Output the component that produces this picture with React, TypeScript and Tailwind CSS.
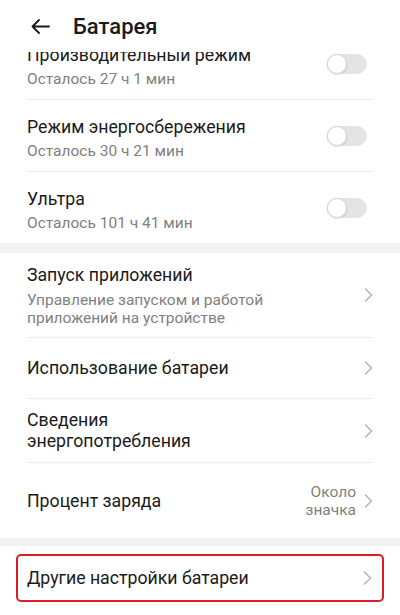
import { ReactNode } from 'react';

const font = { fontFamily: 'Roboto, "Noto Sans", "Liberation Sans", sans-serif' };

function Chevron() {
  return (
    <svg width="9" height="14" viewBox="0 0 9 14" fill="none" className="shrink-0">
      <polyline points="1.5,1 7.5,7 1.5,13" stroke="#b4b4b4" strokeWidth="1.5" strokeLinecap="round" strokeLinejoin="round" />
    </svg>
  );
}

function Toggle() {
  return (
    <div className="w-[40px] h-[20px] rounded-full bg-[#e4e4e4] flex items-center shrink-0 mr-[6px]">
      <div className="w-[20px] h-[20px] rounded-full bg-white border border-[#d4d4d4] shadow-[0_1px_2px_rgba(0,0,0,0.12)]" />
    </div>
  );
}

function Divider() {
  return <div className="mx-[27px] h-px bg-[#ececec]" />;
}

function ModeRow({ title, sub }: { title: string; sub: string }) {
  return (
    <div className="flex items-center justify-between px-[27px] h-[71px] pt-[4px]">
      <div className="flex flex-col">
        <span className="text-[17.7px] leading-[24px] text-[#1a1a1a]">{title}</span>
        <span className="text-[15.5px] leading-[20px] text-[#808080] mt-[2px]">{sub}</span>
      </div>
      <div className="-mt-[4px]">
        <Toggle />
      </div>
    </div>
  );
}

function LinkRow({ children, right, className }: { children: ReactNode; right?: ReactNode; className: string }) {
  return (
    <div className={`flex items-center justify-between px-[27px] ${className}`}>
      <div className="flex flex-col">{children}</div>
      <div className="flex items-center gap-[8px]">
        {right}
        <Chevron />
      </div>
    </div>
  );
}

export default function App() {
  return (
    <div className="w-[400px] h-[615px] bg-white overflow-hidden flex flex-col" style={font}>
      <div className="h-[52px] shrink-0 flex items-center pl-[31px] bg-white relative z-10">
        <svg width="19" height="15" viewBox="0 0 19 15" fill="none">
          <path d="M18 7.5H1.5M8 1L1.5 7.5L8 14" stroke="#1a1a1a" strokeWidth="1.8" strokeLinecap="round" strokeLinejoin="round" />
        </svg>
        <span className="ml-[23px] text-[22px] font-medium text-[#1a1a1a] leading-none mt-[1px]">Батарея</span>
      </div>

      <div className="flex-1 overflow-hidden">
        <div className="mt-[-24px]">
          <ModeRow title="Производительный режим" sub="Осталось 27 ч 1 мин" />
          <Divider />
          <ModeRow title="Режим энергосбережения" sub="Осталось 30 ч 21 мин" />
          <Divider />
          <ModeRow title="Ультра" sub="Осталось 101 ч 41 мин" />

          <div className="h-[10px] bg-[#f2f2f2]" />

          <LinkRow className="h-[84px]">
            <span className="text-[17.7px] leading-[24px] text-[#1a1a1a]">Запуск приложений</span>
            <span className="text-[15.5px] leading-[18px] text-[#808080] mt-[4px] w-[272px]">
              Управление запуском и работой приложений на устройстве
            </span>
          </LinkRow>
          <Divider />
          <LinkRow className="h-[60px]">
            <span className="text-[17.7px] leading-[24px] text-[#1a1a1a]">Использование батареи</span>
          </LinkRow>
          <Divider />
          <LinkRow className="h-[63px] pt-[1px]">
            <span className="text-[17.7px] leading-[21px] text-[#1a1a1a]">Сведения<br />энергопотребления</span>
          </LinkRow>
          <Divider />
          <LinkRow
            className="h-[75px]"
            right={
              <span className="text-[15.5px] leading-[18px] text-[#808080] text-right">
                Около<br />значка
              </span>
            }
          >
            <span className="text-[17.7px] leading-[24px] text-[#1a1a1a]">Процент заряда</span>
          </LinkRow>

          <div className="h-[8px] bg-[#f2f2f2]" />

          <div className="px-[16px] pt-[8px]">
            <div className="border-2 border-[#dc1e24] rounded-[5px] h-[48px] flex items-center justify-between pl-[9px] pr-[10px]">
              <span className="text-[17.7px] leading-[24px] text-[#1a1a1a]">Другие настройки батареи</span>
              <Chevron />
            </div>
          </div>
        </div>
      </div>
    </div>
  );
}
